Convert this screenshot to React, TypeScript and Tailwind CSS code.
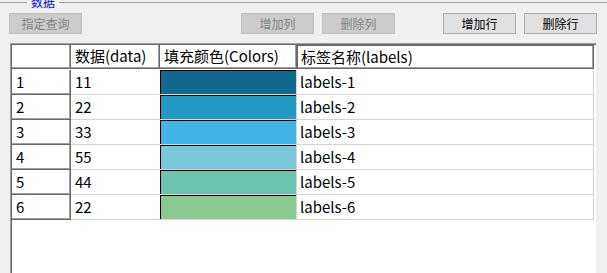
import React from "react";

const rows = [
  { n: "1", v: "11", c: "#116a8e", l: "labels-1" },
  { n: "2", v: "22", c: "#2299c4", l: "labels-2" },
  { n: "3", v: "33", c: "#42b4e5", l: "labels-3" },
  { n: "4", v: "55", c: "#78c8da", l: "labels-4" },
  { n: "5", v: "44", c: "#6cc3b0", l: "labels-5" },
  { n: "6", v: "22", c: "#88c992", l: "labels-6" },
];

const font = { fontFamily: '"Noto Sans CJK SC", "Microsoft YaHei", sans-serif' };

function Btn({ label, disabled }: { label: string; disabled?: boolean }) {
  return (
    <div
      className={
        "w-[73px] h-[21px] flex items-center justify-center text-[12px] leading-none border " +
        (disabled
          ? "bg-[#cccccc] border-[#bfbfbf] text-[#838383]"
          : "bg-[#e1e1e1] border-[#adadad] text-black")
      }
    >
      {label}
    </div>
  );
}

export default function App() {
  return (
    <div
      className="w-[607px] h-[273px] bg-[#f0f0f0] overflow-hidden relative flex flex-col"
      style={font}
    >
      <div className="absolute left-0 right-0 top-[2px] h-px bg-[#a0a0a0]" />
      <div className="absolute left-[27px] top-[-5px] px-[4px] bg-[#f0f0f0] text-[12px] leading-[13px] text-[#0000ff]">
        数据
      </div>
      <div className="flex mt-[13px] h-[21px] pl-[9px]">
        <Btn label="指定查询" disabled />
        <div className="ml-[159px] flex gap-[8px]">
          <Btn label="增加列" disabled />
          <Btn label="删除列" disabled />
        </div>
        <div className="ml-[48px] flex gap-[8px]">
          <Btn label="增加行" />
          <Btn label="删除行" />
        </div>
      </div>
      <div className="mt-[9px] ml-[10px] w-[586px] flex-1 bg-white border-l border-t border-[#a0a0a0]">
        <div className="h-full border-l border-t border-[#696969] text-[15px] text-black">
          <div className="grid grid-cols-[59px_89px_137px_297px] auto-rows-[25px]">
            <div className="h-[24px] border-r border-b border-[#696969] shadow-[inset_-1px_-1px_0_#a0a0a0]" />
            <div className="h-[24px] flex items-center pl-[4px] border-r border-b border-[#696969] shadow-[inset_-1px_-1px_0_#a0a0a0]">
              数据(data)
            </div>
            <div className="h-[24px] flex items-center pl-[4px] border-r border-b border-[#696969] shadow-[inset_-1px_-1px_0_#a0a0a0]">
              填充颜色(Colors)
            </div>
            <div className="h-[24px] flex items-center pl-[3px] border border-[#696969] shadow-[inset_-1px_-1px_0_#a0a0a0]">
              标签名称(labels)
            </div>
            {rows.map((r) => (
              <React.Fragment key={r.n}>
                <div className="flex items-center pl-[4px] border-r border-b border-[#696969] shadow-[inset_-1px_-1px_0_#a0a0a0]">
                  {r.n}
                </div>
                <div className="flex items-center pl-[4px] border-b border-[#d4d4d4]">
                  {r.v}
                </div>
                <div className="border-r border-b border-[#d4d4d4] flex">
                  <div
                    className="flex-1 border-t border-l border-black"
                    style={{ backgroundColor: r.c }}
                  />
                </div>
                <div className="flex items-center pl-[3px] border-r border-b border-[#d4d4d4]">
                  {r.l}
                </div>
              </React.Fragment>
            ))}
          </div>
        </div>
      </div>
    </div>
  );
}
